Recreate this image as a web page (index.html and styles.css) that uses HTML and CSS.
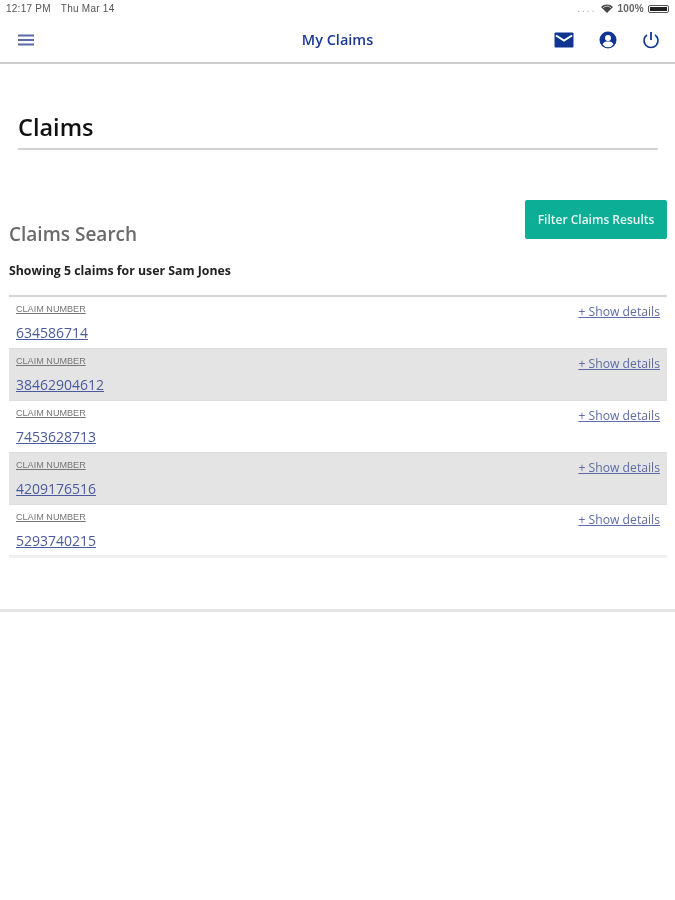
FILE: index.html
```html
<!DOCTYPE html>
<html lang="en">
<head>
<meta charset="utf-8">
<title>My Claims</title>
<link rel="stylesheet" href="styles.css">
</head>
<body>
<div class="status">
  <div class="status-left"><span>12:17 PM</span><span>Thu Mar 14</span></div>
  <div class="status-right">
    <span class="dots">....</span>
    <svg class="wifi" width="12" height="9" viewBox="0 0 12 9"><path d="M6 9 0 3a8.500 8.500 0 0 1 12 0z" fill="#444"/><path d="M2 3.800a5.600 5.600 0 0 1 8 0" stroke="#fff" stroke-width=".7" fill="none"/></svg>
    <span class="pct">100%</span>
    <span class="battery"><span class="battery-fill"></span></span>
  </div>
</div>
<header class="nav">
  <svg class="icon-menu" width="16" height="12" viewBox="0 0 16 12"><path d="M0 1.500h16M0 6h16M0 10.500h16" stroke="#5a6aa8" stroke-width="2" fill="none"/></svg>
  <div class="nav-title">My Claims</div>
  <div class="nav-icons">
    <svg width="20" height="16" viewBox="0 0 20 16"><rect width="19" height="15" x=".5" y=".5" rx="1" fill="#0f3491"/><path d="M2 3.500 10 8.500 18 3.500" stroke="#fff" stroke-width="2" fill="none"/></svg>
    <svg width="18" height="18" viewBox="0 0 18 18"><circle cx="9" cy="9" r="8.500" fill="#0f3491"/><circle cx="9" cy="7" r="3" fill="#fff"/><path d="M3.500 13.500c1-2.500 3-3 5.500-3s4.500.5 5.500 3a7 7 0 0 1-11 0z" fill="#fff"/></svg>
    <svg width="18" height="18" viewBox="0 0 18 18"><path d="M5 3.800a7 7 0 1 0 8 0" stroke="#0f3491" stroke-width="1.600" fill="none"/><path d="M9 1v8" stroke="#0f3491" stroke-width="1.800"/></svg>
  </div>
</header>
<main class="page">
  <h1 class="title">Claims</h1>
  <div class="search-head">
    <div>
      <h2 class="search-title">Claims Search</h2>
      <p class="showing">Showing 5 claims for user Sam Jones</p>
    </div>
    <button class="filter">Filter Claims Results</button>
  </div>
  <div class="list">
    <div class="row"><div><div class="label">CLAIM NUMBER</div><a class="num" href="#">634586714</a></div><a class="details" href="#">+ Show details</a></div>
    <div class="row alt"><div><div class="label">CLAIM NUMBER</div><a class="num" href="#">38462904612</a></div><a class="details" href="#">+ Show details</a></div>
    <div class="row"><div><div class="label">CLAIM NUMBER</div><a class="num" href="#">7453628713</a></div><a class="details" href="#">+ Show details</a></div>
    <div class="row alt"><div><div class="label">CLAIM NUMBER</div><a class="num" href="#">4209176516</a></div><a class="details" href="#">+ Show details</a></div>
    <div class="row"><div><div class="label">CLAIM NUMBER</div><a class="num" href="#">5293740215</a></div><a class="details" href="#">+ Show details</a></div>
  </div>
</main>
<div class="foot-rule"></div>
</body>
</html>
```
FILE: styles.css
```css
* { box-sizing: border-box; }
html, body { margin: 0; padding: 0; }
body { background: #fff; font-family: "Open Sans", sans-serif; width: 675px; height: 900px; overflow: hidden; filter: blur(.45px); }
.status { height: 17px; display: flex; justify-content: space-between; align-items: center; padding: 0 6px; font-family: "Liberation Sans", sans-serif; font-size: 10px; color: #555; letter-spacing: .25px; }
.status-left { display: flex; gap: 10px; }
.status-right { display: flex; align-items: center; gap: 4px; }
.dots { color: #aaa; letter-spacing: 2px; margin-right: 1px; }
.pct { font-weight: 700; color: #666; }
.battery { width: 21px; height: 8px; border: 1px solid #555; border-radius: 2px; display: block; padding: 1px; }
.battery-fill { display: block; height: 100%; background: #222; }
.nav { height: 47px; border-bottom: 2px solid #cfcfcf; display: flex; align-items: center; padding: 0 15px 0 18px; position: relative; }
.nav-title { position: absolute; left: 0; right: 0; text-align: center; font-size: 14.500px; font-weight: 600; color: #1c3a94; }
.nav-icons { margin-left: auto; display: flex; align-items: center; gap: 25px; position: relative; }
.page { padding: 0 8px 0 9px; }
.title { margin: 45px 9px 0 9px; height: 41px; border-bottom: 2px solid #d2d2d2; font-size: 23.500px; line-height: 37px; font-weight: 600; color: #111; }
.search-head { display: flex; justify-content: space-between; align-items: flex-start; margin-top: 50px; height: 95px; }
.search-title { margin: 21px 0 0; font-size: 19px; line-height: 26px; font-weight: 600; color: #6a6a6a; }
.showing { margin: 16px 0 0; font-size: 12.300px; line-height: 16px; font-weight: 700; color: #222; }
.filter { width: 142px; height: 39px; border: 0; border-radius: 2px; background: #0cae95; color: #e6f6f3; font: 600 12px "Open Sans", sans-serif; padding: 0; }
.list { border-top: 2px solid #d4d4d4; border-bottom: 3px solid #f0f0f0; }
.row { height: 52px; display: flex; justify-content: space-between; padding: 6px 7px 0; border-bottom: 1px solid #ddd; }
.row:last-child { height: 50px; border-bottom: 0; }
.alt { background: #e4e4e4; }
.label { margin-top: 1px; font-family: "Liberation Sans", sans-serif; font-size: 9.100px; line-height: 11px; color: #777; text-decoration: underline; }
.num { display: block; margin-top: 8px; font-size: 14px; line-height: 20px; color: #4a5a9e; }
.details { font-size: 12.200px; line-height: 17px; color: #5d6ca5; }
.foot-rule { height: 3px; background: #e4e4e4; margin-top: 51px; }
```
